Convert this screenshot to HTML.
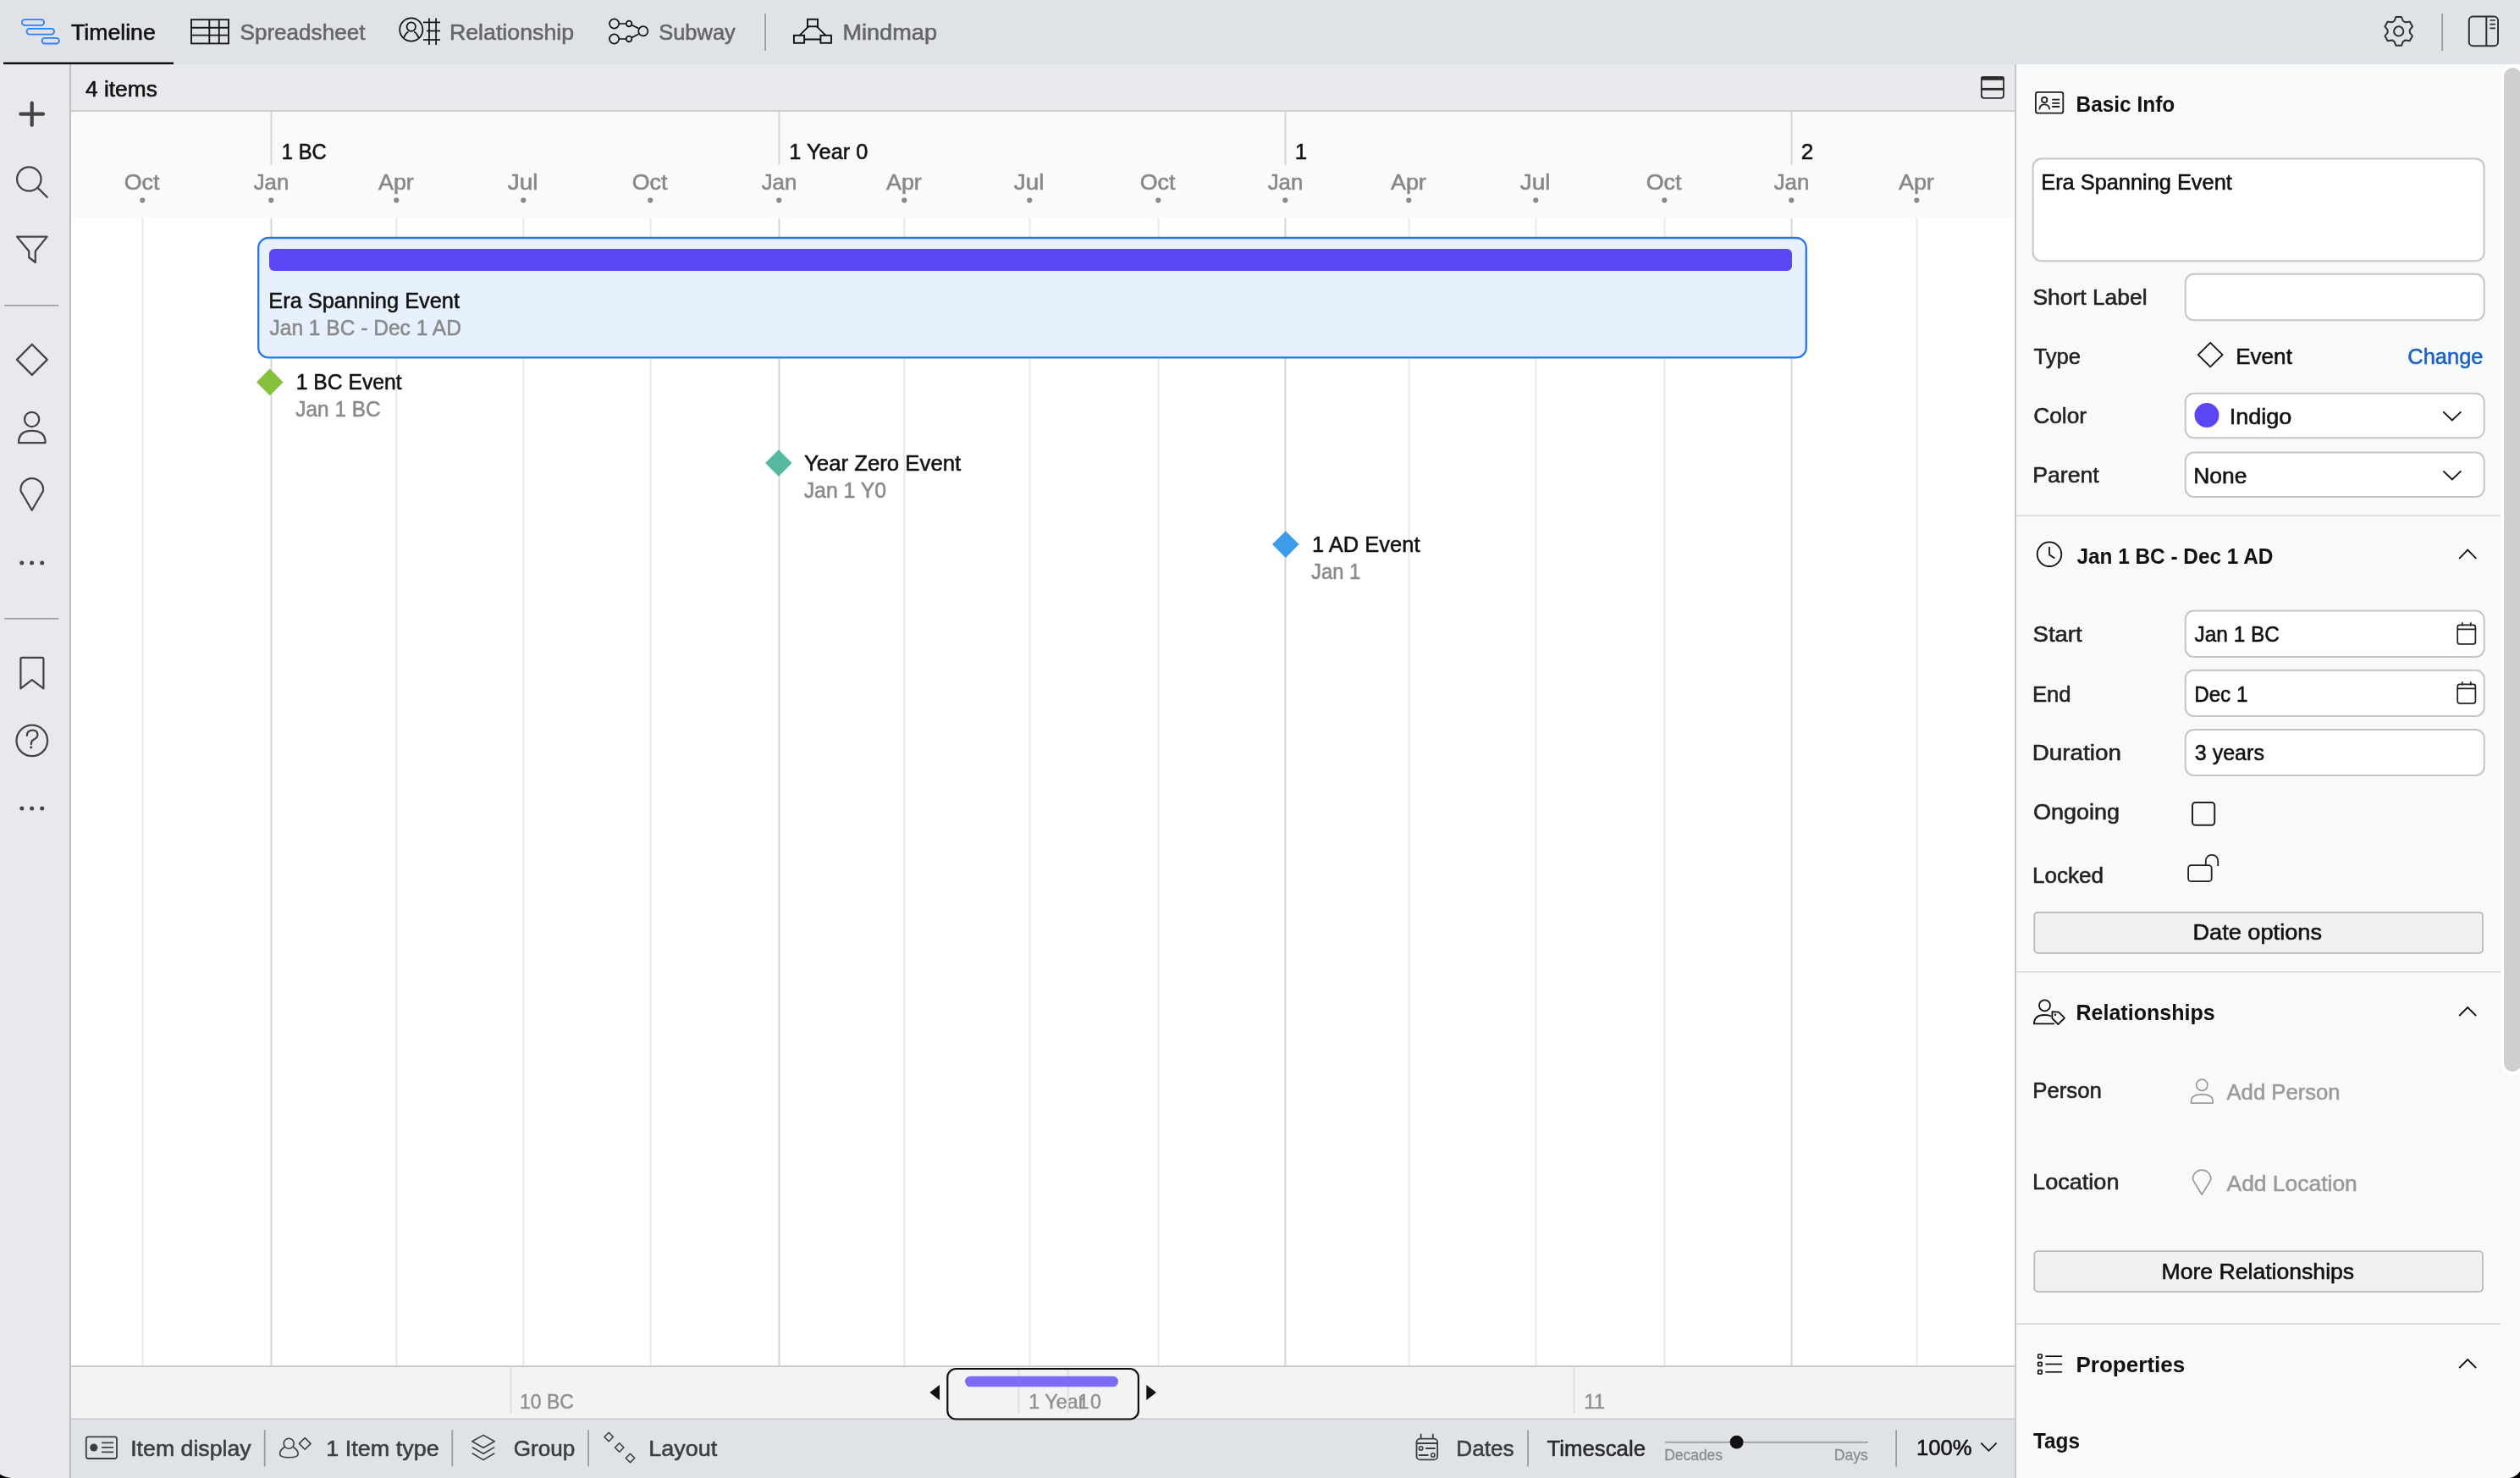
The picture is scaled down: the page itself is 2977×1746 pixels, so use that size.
<!DOCTYPE html>
<html><head><meta charset="utf-8"><title>Timeline</title>
<style>
html,body{margin:0;padding:0;width:2977px;height:1746px;overflow:hidden;background:#f8f9f9;}
body{position:relative;font-family:'Liberation Sans', sans-serif;}
text{font-family:'Liberation Sans', sans-serif;}
</style></head><body>
<svg width="2977" height="1746" viewBox="0 0 2977 1746" style="position:absolute;left:0;top:0;font-family:'Liberation Sans', sans-serif;will-change:transform"><rect x="0" y="0" width="2977" height="1746" fill="#f8f9f9" />
<rect x="0" y="0" width="2977" height="76" fill="#dfe2e6" />
<rect x="0" y="76" width="83" height="1670" fill="#e8e9ec" />
<rect x="82" y="76" width="2" height="1670" fill="#bcbdc0" />
<rect x="84" y="76" width="2297" height="55" fill="#e9eaee" />
<rect x="84" y="130" width="2297" height="2" fill="#cdcdcf" />
<rect x="84" y="132" width="2297" height="126" fill="#fafafa" />
<rect x="84" y="258" width="2297" height="1356" fill="#ffffff" />
<rect x="84" y="1613" width="2297" height="2" fill="#cbcbcb" />
<rect x="84" y="1615" width="2297" height="61" fill="#f3f3f3" />
<rect x="84" y="1675.5" width="2297" height="2" fill="#c9c9cb" />
<rect x="84" y="1677" width="2297" height="69" fill="#dfe2e6" />
<rect x="2381" y="76" width="596" height="1670" fill="#f8f9f9" />
<rect x="2380" y="76" width="2" height="1670" fill="#c8c9ca" />
<g fill="none" stroke="#2f7ff7" stroke-width="1.8"><rect x="25.9" y="23.1" width="26.2" height="6.7" rx="3.3"/><rect x="31.5" y="33.9" width="32.6" height="6.7" rx="3.3"/><rect x="49.6" y="44.8" width="20.2" height="6.7" rx="3.3"/></g>
<rect x="4" y="73.5" width="201" height="2.5" fill="#111" />
<text id="t0" x="84.0" y="47.3" font-size="26" fill="#111" stroke="#111" stroke-width="0.55" stroke-linejoin="round" textLength="99.80" lengthAdjust="spacingAndGlyphs" >Timeline</text>
<g fill="none" stroke="#1a1a1a" stroke-width="1.9"><rect x="226" y="23.2" width="44" height="28.2"/><line x1="226" y1="32.8" x2="270" y2="32.8"/><line x1="226" y1="41.6" x2="270" y2="41.6"/><line x1="247.3" y1="23.2" x2="247.3" y2="51.4"/><line x1="258.8" y1="23.2" x2="258.8" y2="51.4"/></g>
<text id="t1" x="283.5" y="47.3" font-size="26" fill="#666" stroke="#666" stroke-width="0.55" stroke-linejoin="round" textLength="147.95" lengthAdjust="spacingAndGlyphs" >Spreadsheet</text>
<g fill="none" stroke="#111" stroke-width="1.7"><circle cx="485.8" cy="35" r="13.6"/><circle cx="485.8" cy="31.6" r="5.2"/><path d="M476.6 45.5 Q480 38 482.5 37.6 M495 45.5 Q491.6 38 489.1 37.6"/><line x1="507" y1="21.5" x2="507" y2="53"/><line x1="515.1" y1="21.5" x2="515.1" y2="53"/><line x1="500" y1="26.4" x2="520" y2="26.4"/><line x1="504" y1="36.5" x2="520" y2="36.5"/><line x1="500" y1="47" x2="520" y2="47"/></g>
<text id="t2" x="530.94" y="47.3" font-size="26" fill="#666" stroke="#666" stroke-width="0.55" stroke-linejoin="round" textLength="147.15" lengthAdjust="spacingAndGlyphs" >Relationship</text>
<g fill="none" stroke="#111" stroke-width="1.7"><circle cx="725.6" cy="28" r="5.6"/><circle cx="725.6" cy="46" r="5.6"/><circle cx="743.1" cy="28" r="3.3"/><circle cx="743.1" cy="46" r="3.3"/><circle cx="759.8" cy="36.8" r="5.6"/><path d="M731.2 28 H739.8 M731.2 46 H739.8 M746.2 29.6 L754.4 33.6 M746.2 44.4 L754.4 40.2"/></g>
<text id="t3" x="778.26" y="47.3" font-size="26" fill="#666" stroke="#666" stroke-width="0.55" stroke-linejoin="round" textLength="90.49" lengthAdjust="spacingAndGlyphs" >Subway</text>
<rect x="903.2" y="16" width="1.8" height="44" fill="#9b9c9f" />
<g fill="none" stroke="#111" stroke-width="1.9"><rect x="954" y="22.8" width="12" height="8.5"/><rect x="937.9" y="41.8" width="12.2" height="9"/><rect x="969.4" y="41.8" width="12.6" height="9"/><path d="M955 31.3 L944.5 41.8 M965 31.3 L975.5 41.8 M950.1 46.5 H969.4"/></g>
<text id="t4" x="995.41" y="47.3" font-size="26" fill="#666" stroke="#666" stroke-width="0.55" stroke-linejoin="round" textLength="111.56" lengthAdjust="spacingAndGlyphs" >Mindmap</text>
<g fill="none" stroke="#2e2f31" stroke-width="2" stroke-linejoin="round"><path d="M2828.54 24.75 L2830.42 20.02 L2836.98 20.02 L2838.86 24.75 L2841.64 26.36 L2846.68 25.62 L2849.96 31.30 L2846.80 35.29 L2846.80 38.51 L2849.96 42.50 L2846.68 48.18 L2841.64 47.44 L2838.86 49.05 L2836.98 53.78 L2830.42 53.78 L2828.54 49.05 L2825.76 47.44 L2820.72 48.18 L2817.44 42.50 L2820.60 38.51 L2820.60 35.29 L2817.44 31.30 L2820.72 25.62 L2825.76 26.36Z"/><circle cx="2833.7" cy="36.9" r="5.6"/></g>
<rect x="2884.3" y="16" width="1.8" height="44" fill="#9b9c9f" />
<g fill="none" stroke="#2e2f31" stroke-width="2"><rect x="2916.8" y="19.6" width="34.2" height="34.6" rx="4.5"/><line x1="2937.3" y1="19.6" x2="2937.3" y2="54.2"/></g><g stroke="#2e2f31" stroke-width="1.7" stroke-linecap="round"><line x1="2942" y1="24" x2="2947.2" y2="24"/><line x1="2942" y1="28.7" x2="2947.2" y2="28.7"/><line x1="2942" y1="33.4" x2="2947.2" y2="33.4"/></g>
<g fill="none" stroke="#444" stroke-width="2.25" stroke-linecap="round" stroke-linejoin="round"><path d="M37.7 121.6 V147.8 M24.4 134.7 H51" stroke-width="4.2"/><circle cx="34.3" cy="211.5" r="14.2"/><path d="M44.6 221.9 L55.8 233"/><path d="M20 279.6 H55.6 L41.8 296.8 V310 L34.2 304 V296.8 Z"/><path d="M37.8 406.8 L55.8 424.9 L37.8 442.9 L19.9 424.9 Z"/><circle cx="37.6" cy="495.4" r="8.6"/><path d="M22 523 Q22 508.8 37.6 508.8 Q53.6 508.8 53.6 523 Z"/><path d="M37.7 602.8 L28 586 Q24.5 580.5 24.5 579.5 A13.3 13.3 0 1 1 51 579.5 Q51 580.5 47.5 586 Z"/><path d="M24.4 813.4 V778.4 Q24.4 776.8 26 776.8 H49.8 Q51.4 776.8 51.4 778.4 V813.4 L37.8 803.2 Z"/><circle cx="37.8" cy="874.9" r="18.3"/><path d="M31.8 869 Q32.2 862.6 38.5 862.6 Q44.4 862.6 44.4 868 Q44.4 871.6 40 873.6 Q36.8 875 36.8 879.2"/></g>
<circle cx="36.7" cy="882.8" r="1.6" fill="#444"/>
<circle cx="25.8" cy="665.1" r="2.5" fill="#444"/>
<circle cx="37.6" cy="665.1" r="2.5" fill="#444"/>
<circle cx="49.7" cy="665.1" r="2.5" fill="#444"/>
<circle cx="25.8" cy="955" r="2.5" fill="#444"/>
<circle cx="37.6" cy="955" r="2.5" fill="#444"/>
<circle cx="49.7" cy="955" r="2.5" fill="#444"/>
<rect x="5" y="360" width="64" height="1.6" fill="#9a9b9e" />
<rect x="5" y="730" width="64" height="1.6" fill="#9a9b9e" />
<text id="t5" x="101.0" y="114" font-size="26" fill="#111" stroke="#111" stroke-width="0.55" stroke-linejoin="round" textLength="84.82" lengthAdjust="spacingAndGlyphs" >4 items</text>
<g fill="none" stroke="#2b2b2b" stroke-width="1.8"><rect x="2340.8" y="91.1" width="26.1" height="24.7" rx="3"/></g><rect x="2340" y="90.2" width="27.8" height="4.6" fill="#2b2b2b" rx="1.5" /><rect x="2340.5" y="103.9" width="27" height="2.8" fill="#2b2b2b" />
<rect x="167.5" y="258" width="2" height="1355" fill="#e8e8e8" />
<text id="t6" x="146.7" y="223.8" font-size="26" fill="#878787" stroke="#878787" stroke-width="0.55" stroke-linejoin="round" textLength="41.72" lengthAdjust="spacingAndGlyphs" >Oct</text>
<circle cx="168.25" cy="236.6" r="3.1" fill="#8a8a8a"/>
<rect x="319.5" y="258" width="2" height="1355" fill="#d6d6d6" />
<text id="t7" x="299.69" y="223.8" font-size="26" fill="#878787" stroke="#878787" stroke-width="0.55" stroke-linejoin="round" textLength="41.67" lengthAdjust="spacingAndGlyphs" >Jan</text>
<circle cx="320.25" cy="236.6" r="3.1" fill="#8a8a8a"/>
<rect x="319.5" y="132" width="2" height="63" fill="#d6d6d6" />
<rect x="467.5" y="258" width="2" height="1355" fill="#e8e8e8" />
<text id="t8" x="446.92" y="223.8" font-size="26" fill="#878787" stroke="#878787" stroke-width="0.55" stroke-linejoin="round" textLength="41.95" lengthAdjust="spacingAndGlyphs" >Apr</text>
<circle cx="468.25" cy="236.6" r="3.1" fill="#8a8a8a"/>
<rect x="617.5" y="258" width="2" height="1355" fill="#e8e8e8" />
<text id="t9" x="599.76" y="223.8" font-size="26" fill="#878787" stroke="#878787" stroke-width="0.55" stroke-linejoin="round" textLength="35.85" lengthAdjust="spacingAndGlyphs" >Jul</text>
<circle cx="618.25" cy="236.6" r="3.1" fill="#8a8a8a"/>
<rect x="767.5" y="258" width="2" height="1355" fill="#e8e8e8" />
<text id="t10" x="746.7" y="223.8" font-size="26" fill="#878787" stroke="#878787" stroke-width="0.55" stroke-linejoin="round" textLength="41.72" lengthAdjust="spacingAndGlyphs" >Oct</text>
<circle cx="768.25" cy="236.6" r="3.1" fill="#8a8a8a"/>
<rect x="919.5" y="258" width="2" height="1355" fill="#d6d6d6" />
<text id="t11" x="899.69" y="223.8" font-size="26" fill="#878787" stroke="#878787" stroke-width="0.55" stroke-linejoin="round" textLength="41.67" lengthAdjust="spacingAndGlyphs" >Jan</text>
<circle cx="920.25" cy="236.6" r="3.1" fill="#8a8a8a"/>
<rect x="919.5" y="132" width="2" height="63" fill="#d6d6d6" />
<rect x="1067.5" y="258" width="2" height="1355" fill="#e8e8e8" />
<text id="t12" x="1046.92" y="223.8" font-size="26" fill="#878787" stroke="#878787" stroke-width="0.55" stroke-linejoin="round" textLength="41.95" lengthAdjust="spacingAndGlyphs" >Apr</text>
<circle cx="1068.25" cy="236.6" r="3.1" fill="#8a8a8a"/>
<rect x="1215.5" y="258" width="2" height="1355" fill="#e8e8e8" />
<text id="t13" x="1197.76" y="223.8" font-size="26" fill="#878787" stroke="#878787" stroke-width="0.55" stroke-linejoin="round" textLength="35.85" lengthAdjust="spacingAndGlyphs" >Jul</text>
<circle cx="1216.25" cy="236.6" r="3.1" fill="#8a8a8a"/>
<rect x="1367.5" y="258" width="2" height="1355" fill="#e8e8e8" />
<text id="t14" x="1346.7" y="223.8" font-size="26" fill="#878787" stroke="#878787" stroke-width="0.55" stroke-linejoin="round" textLength="41.72" lengthAdjust="spacingAndGlyphs" >Oct</text>
<circle cx="1368.25" cy="236.6" r="3.1" fill="#8a8a8a"/>
<rect x="1517.5" y="258" width="2" height="1355" fill="#d6d6d6" />
<text id="t15" x="1497.69" y="223.8" font-size="26" fill="#878787" stroke="#878787" stroke-width="0.55" stroke-linejoin="round" textLength="41.67" lengthAdjust="spacingAndGlyphs" >Jan</text>
<circle cx="1518.25" cy="236.6" r="3.1" fill="#8a8a8a"/>
<rect x="1517.5" y="132" width="2" height="63" fill="#d6d6d6" />
<rect x="1663.5" y="258" width="2" height="1355" fill="#e8e8e8" />
<text id="t16" x="1642.92" y="223.8" font-size="26" fill="#878787" stroke="#878787" stroke-width="0.55" stroke-linejoin="round" textLength="41.95" lengthAdjust="spacingAndGlyphs" >Apr</text>
<circle cx="1664.25" cy="236.6" r="3.1" fill="#8a8a8a"/>
<rect x="1813.5" y="258" width="2" height="1355" fill="#e8e8e8" />
<text id="t17" x="1795.76" y="223.8" font-size="26" fill="#878787" stroke="#878787" stroke-width="0.55" stroke-linejoin="round" textLength="35.85" lengthAdjust="spacingAndGlyphs" >Jul</text>
<circle cx="1814.25" cy="236.6" r="3.1" fill="#8a8a8a"/>
<rect x="1965.5" y="258" width="2" height="1355" fill="#e8e8e8" />
<text id="t18" x="1944.7" y="223.8" font-size="26" fill="#878787" stroke="#878787" stroke-width="0.55" stroke-linejoin="round" textLength="41.72" lengthAdjust="spacingAndGlyphs" >Oct</text>
<circle cx="1966.25" cy="236.6" r="3.1" fill="#8a8a8a"/>
<rect x="2115.5" y="258" width="2" height="1355" fill="#d6d6d6" />
<text id="t19" x="2095.69" y="223.8" font-size="26" fill="#878787" stroke="#878787" stroke-width="0.55" stroke-linejoin="round" textLength="41.67" lengthAdjust="spacingAndGlyphs" >Jan</text>
<circle cx="2116.25" cy="236.6" r="3.1" fill="#8a8a8a"/>
<rect x="2115.5" y="132" width="2" height="63" fill="#d6d6d6" />
<rect x="2263.5" y="258" width="2" height="1355" fill="#e8e8e8" />
<text id="t20" x="2242.92" y="223.8" font-size="26" fill="#878787" stroke="#878787" stroke-width="0.55" stroke-linejoin="round" textLength="41.95" lengthAdjust="spacingAndGlyphs" >Apr</text>
<circle cx="2264.25" cy="236.6" r="3.1" fill="#8a8a8a"/>
<text id="t21" x="332.83" y="188" font-size="26" fill="#111" stroke="#111" stroke-width="0.55" stroke-linejoin="round" textLength="52.91" lengthAdjust="spacingAndGlyphs" >1 BC</text>
<text id="t22" x="932.27" y="188" font-size="26" fill="#111" stroke="#111" stroke-width="0.55" stroke-linejoin="round" textLength="93.15" lengthAdjust="spacingAndGlyphs" >1 Year 0</text>
<text id="t23" x="1529.75" y="188" font-size="26" fill="#111" stroke="#111" stroke-width="0.55" stroke-linejoin="round" >1</text>
<text id="t24" x="2127.65" y="188" font-size="26" fill="#111" stroke="#111" stroke-width="0.55" stroke-linejoin="round" >2</text>
<rect x="305.2" y="281" width="1828.6" height="141.4" fill="#e7f0fd" rx="12" stroke="#2277f5" stroke-width="2.3" />
<rect x="318" y="294" width="1799" height="26" fill="#5b46f5" rx="6" />
<text id="t25" x="317.29" y="363.8" font-size="26" fill="#111" stroke="#111" stroke-width="0.55" stroke-linejoin="round" textLength="225.75" lengthAdjust="spacingAndGlyphs" >Era Spanning Event</text>
<text id="t26" x="318.47" y="395.8" font-size="26" fill="#8a8a8a" stroke="#8a8a8a" stroke-width="0.55" stroke-linejoin="round" textLength="226.40" lengthAdjust="spacingAndGlyphs" >Jan 1 BC - Dec 1 AD</text>
<path d="M318.8 435.59999999999997 L334.6 451.4 L318.8 467.2 L303.0 451.4 Z" fill="#87c13b"/>
<text id="t27" x="349.68" y="460" font-size="26" fill="#111" stroke="#111" stroke-width="0.55" stroke-linejoin="round" textLength="124.94" lengthAdjust="spacingAndGlyphs" >1 BC Event</text>
<text id="t28" x="349.37" y="492" font-size="26" fill="#8a8a8a" stroke="#8a8a8a" stroke-width="0.55" stroke-linejoin="round" textLength="100.26" lengthAdjust="spacingAndGlyphs" >Jan 1 BC</text>
<path d="M919.8 531.2 L935.5999999999999 547 L919.8 562.8 L904.0 547 Z" fill="#55b9a0"/>
<text id="t29" x="950.0" y="556.3" font-size="26" fill="#111" stroke="#111" stroke-width="0.55" stroke-linejoin="round" textLength="185.24" lengthAdjust="spacingAndGlyphs" >Year Zero Event</text>
<text id="t30" x="949.7" y="587.8" font-size="26" fill="#8a8a8a" stroke="#8a8a8a" stroke-width="0.55" stroke-linejoin="round" textLength="97.46" lengthAdjust="spacingAndGlyphs" >Jan 1 Y0</text>
<path d="M1518.8 627.3000000000001 L1534.6 643.1 L1518.8 658.9 L1503.0 643.1 Z" fill="#3d9ce9"/>
<text id="t31" x="1550.02" y="651.8" font-size="26" fill="#111" stroke="#111" stroke-width="0.55" stroke-linejoin="round" textLength="127.46" lengthAdjust="spacingAndGlyphs" >1 AD Event</text>
<text id="t32" x="1549.1" y="683.8" font-size="26" fill="#8a8a8a" stroke="#8a8a8a" stroke-width="0.55" stroke-linejoin="round" textLength="58.26" lengthAdjust="spacingAndGlyphs" >Jan 1</text>
<rect x="602.5" y="1615" width="2" height="55" fill="#e0e0e0" />
<text id="t33" x="614.04" y="1664" font-size="24" fill="#909090" stroke="#909090" stroke-width="0.45" stroke-linejoin="round" textLength="63.93" lengthAdjust="spacingAndGlyphs" >10 BC</text>
<rect x="1202.3" y="1615" width="2" height="55" fill="#e0e0e0" />
<text id="t34" x="1215.23" y="1664" font-size="24" fill="#909090" stroke="#909090" stroke-width="0.45" stroke-linejoin="round" textLength="85.64" lengthAdjust="spacingAndGlyphs" >1 Year 0</text>
<rect x="1260.7" y="1615" width="2" height="55" fill="#e0e0e0" />
<text id="t35" x="1273.2" y="1664" font-size="24" fill="#909090" stroke="#909090" stroke-width="0.45" stroke-linejoin="round" >1</text>
<rect x="1858.5" y="1615" width="2" height="55" fill="#e0e0e0" />
<text id="t36" x="1871.15" y="1664" font-size="24" fill="#909090" stroke="#909090" stroke-width="0.45" stroke-linejoin="round" >11</text>
<rect x="1119.3" y="1617" width="225.6" height="59.5" fill="none" rx="10" stroke="#111" stroke-width="2.2" />
<rect x="1140" y="1625.7" width="181" height="12.6" fill="#7b6cf6" rx="6.3" />
<path d="M1098.3 1645 L1110 1636 V1654 Z" fill="#111"/>
<path d="M1366 1645 L1354.3 1636 V1654 Z" fill="#111"/>
<g fill="none" stroke="#3d3e40" stroke-width="1.8" stroke-linecap="round" stroke-linejoin="round"><rect x="101.8" y="1697.4" width="36.2" height="25.6" rx="2.5"/><path d="M120.8 1704.4 H133.4 M120.8 1709.8 H133.4 M120.8 1715.4 H133.4"/></g><circle cx="110.8" cy="1710" r="4.6" fill="#3d3e40"/>
<text id="t37" x="154.2" y="1719.5" font-size="26" fill="#3d3e40" stroke="#3d3e40" stroke-width="0.55" stroke-linejoin="round" textLength="142.53" lengthAdjust="spacingAndGlyphs" >Item display</text>
<rect x="311.8" y="1689.3" width="1.8" height="43" fill="#9b9c9f" />
<g fill="none" stroke="#3d3e40" stroke-width="1.6" stroke-linejoin="round"><circle cx="341.2" cy="1705.2" r="6"/><path d="M336 1709.5 Q330.6 1713 330.6 1717.5 Q330.6 1721.8 341.3 1721.8 Q352.2 1721.8 352.2 1717.5 Q352.2 1713 346.4 1709.5"/><path d="M360.2 1698.6 L367 1705.4 L360.2 1712.2 L353.4 1705.4 Z"/></g>
<text id="t38" x="385.21" y="1719.5" font-size="26" fill="#3d3e40" stroke="#3d3e40" stroke-width="0.55" stroke-linejoin="round" textLength="133.44" lengthAdjust="spacingAndGlyphs" >1 Item type</text>
<rect x="533.4" y="1689.3" width="1.8" height="43" fill="#9b9c9f" />
<g fill="none" stroke="#3d3e40" stroke-width="1.6" stroke-linejoin="round"><path d="M571 1695.4 L584.2 1702.8 L571 1710.2 L557.8 1702.8 Z"/><path d="M557.8 1709.6 L571 1717.2 L584.2 1709.6"/><path d="M557.8 1716.8 L571 1724.6 L584.2 1716.8"/></g>
<text id="t39" x="606.7" y="1719.5" font-size="26" fill="#3d3e40" stroke="#3d3e40" stroke-width="0.55" stroke-linejoin="round" textLength="72.57" lengthAdjust="spacingAndGlyphs" >Group</text>
<rect x="694.2" y="1689.3" width="1.8" height="43" fill="#9b9c9f" />
<g fill="none" stroke="#3d3e40" stroke-width="1.6" stroke-linejoin="round"><path d="M719.2 1692.3 L724.4000000000001 1697.5 L719.2 1702.7 L714.0 1697.5 Z"/><path d="M731.7 1704.8 L736.9000000000001 1710 L731.7 1715.2 L726.5 1710 Z"/><path d="M744.5 1717.3 L749.7 1722.5 L744.5 1727.7 L739.3 1722.5 Z"/></g>
<text id="t40" x="766.22" y="1719.5" font-size="26" fill="#3d3e40" stroke="#3d3e40" stroke-width="0.55" stroke-linejoin="round" textLength="81.16" lengthAdjust="spacingAndGlyphs" >Layout</text>
<g fill="none" stroke="#3d3e40" stroke-width="1.8" stroke-linecap="round"><rect x="1673.5" y="1699.6" width="24.6" height="24.8" rx="4"/><path d="M1673.5 1705 H1698.1 M1678.6 1694.5 V1699 M1692.8 1694.5 V1699 M1684.8 1711 H1695 M1676.5 1719 H1686.8"/><circle cx="1678.6" cy="1711" r="2.2" stroke-width="1.6"/><circle cx="1692.8" cy="1719" r="2.2" stroke-width="1.6"/></g>
<text id="t41" x="1720.29" y="1720" font-size="26" fill="#3d3e40" stroke="#3d3e40" stroke-width="0.55" stroke-linejoin="round" textLength="68.33" lengthAdjust="spacingAndGlyphs" >Dates</text>
<rect x="1804.2" y="1689.5" width="1.8" height="43" fill="#9b9c9f" />
<text id="t42" x="1827.4" y="1720" font-size="26" fill="#2a2a2a" stroke="#2a2a2a" stroke-width="0.55" stroke-linejoin="round" textLength="116.60" lengthAdjust="spacingAndGlyphs" >Timescale</text>
<rect x="1967" y="1702.9" width="240" height="1.7" fill="#9a9a9a" />
<circle cx="2051.6" cy="1703.7" r="7.9" fill="#111"/>
<text id="t43" x="1966.23" y="1725" font-size="18" fill="#8c8c8c" stroke="#8c8c8c" stroke-width="0.3" stroke-linejoin="round" textLength="68.81" lengthAdjust="spacingAndGlyphs" >Decades</text>
<text id="t44" x="2166.82" y="1725" font-size="18" fill="#8c8c8c" stroke="#8c8c8c" stroke-width="0.3" stroke-linejoin="round" textLength="39.96" lengthAdjust="spacingAndGlyphs" >Days</text>
<rect x="2239.2" y="1689.5" width="1.8" height="43" fill="#9b9c9f" />
<text id="t45" x="2264.12" y="1719.2" font-size="26" fill="#111" stroke="#111" stroke-width="0.55" stroke-linejoin="round" textLength="65.37" lengthAdjust="spacingAndGlyphs" >100%</text>
<path d="M2340.3 1704.6 L2349.4 1713.8 L2358.6 1704.6" fill="none" stroke="#111" stroke-width="1.8"/>
<g fill="none" stroke="#1e1e1e" stroke-width="1.8"><rect x="2404.9" y="108.9" width="32.4" height="24.8" rx="2.5"/><circle cx="2415.2" cy="118" r="3.2"/><path d="M2409.2 129.4 Q2409.8 123.4 2415.2 123.4 Q2420.6 123.4 2421.4 129.4"/><path d="M2424.2 117.6 H2433.2 M2424.2 121.8 H2433.2 M2424.2 126 H2433.2"/></g>
<text id="t46" x="2452.59" y="132" font-size="26" fill="#111" font-weight="700" textLength="116.61" lengthAdjust="spacingAndGlyphs" >Basic Info</text>
<rect x="2401.6" y="187.5" width="533" height="120.8" fill="#fff" rx="10" stroke="#c5c5c5" stroke-width="2" />
<text id="t47" x="2411.25" y="224" font-size="26" fill="#111" stroke="#111" stroke-width="0.55" stroke-linejoin="round" textLength="225.55" lengthAdjust="spacingAndGlyphs" >Era Spanning Event</text>
<text id="t48" x="2401.38" y="360.2" font-size="26" fill="#222" stroke="#222" stroke-width="0.55" stroke-linejoin="round" textLength="135.22" lengthAdjust="spacingAndGlyphs" >Short Label</text>
<rect x="2581.7" y="323.8" width="353" height="54.4" fill="#fff" rx="10" stroke="#c5c5c5" stroke-width="2" />
<text id="t49" x="2402.4" y="429.6" font-size="26" fill="#222" stroke="#222" stroke-width="0.55" stroke-linejoin="round" textLength="55.57" lengthAdjust="spacingAndGlyphs" >Type</text>
<path d="M2611.2 404.8 L2625.6 419.1 L2611.2 433.4 L2596.8 419.1 Z" fill="none" stroke="#111" stroke-width="1.8" stroke-linejoin="round"/>
<text id="t50" x="2641.2" y="429.6" font-size="26" fill="#111" stroke="#111" stroke-width="0.55" stroke-linejoin="round" textLength="66.70" lengthAdjust="spacingAndGlyphs" >Event</text>
<text id="t51" x="2844.25" y="429.6" font-size="26" fill="#1b5fc6" stroke="#1b5fc6" stroke-width="0.55" stroke-linejoin="round" textLength="89.24" lengthAdjust="spacingAndGlyphs" >Change</text>
<text id="t52" x="2402.19" y="500.2" font-size="26" fill="#222" stroke="#222" stroke-width="0.55" stroke-linejoin="round" textLength="62.85" lengthAdjust="spacingAndGlyphs" >Color</text>
<rect x="2581.7" y="464.7" width="353" height="52.6" fill="#fff" rx="10" stroke="#c5c5c5" stroke-width="2" />
<circle cx="2607" cy="490.5" r="14.5" fill="#5b46f5"/>
<text id="t53" x="2633.74" y="501.2" font-size="26" fill="#111" stroke="#111" stroke-width="0.55" stroke-linejoin="round" textLength="73.62" lengthAdjust="spacingAndGlyphs" >Indigo</text>
<path d="M2886.3 486.4 L2896.8500000000004 496.4 L2907.4 486.4" fill="none" stroke="#111" stroke-width="1.8"/>
<text id="t54" x="2401.15" y="570.4" font-size="26" fill="#222" stroke="#222" stroke-width="0.55" stroke-linejoin="round" textLength="78.55" lengthAdjust="spacingAndGlyphs" >Parent</text>
<rect x="2581.7" y="534.6" width="353" height="52.4" fill="#fff" rx="10" stroke="#c5c5c5" stroke-width="2" />
<text id="t55" x="2591.27" y="570.6" font-size="26" fill="#111" stroke="#111" stroke-width="0.55" stroke-linejoin="round" textLength="63.19" lengthAdjust="spacingAndGlyphs" >None</text>
<path d="M2886.3 556.4 L2896.8500000000004 566.4 L2907.4 556.4" fill="none" stroke="#111" stroke-width="1.8"/>
<rect x="2382" y="608" width="572" height="2" fill="#dfe1e1" />
<g fill="none" stroke="#111" stroke-width="1.8"><circle cx="2421" cy="654.7" r="14.3"/><path d="M2421 646 V655.3 L2427.4 659.6"/></g>
<text id="t56" x="2453.4" y="666" font-size="26" fill="#111" font-weight="700" textLength="232.03" lengthAdjust="spacingAndGlyphs" >Jan 1 BC - Dec 1 AD</text>
<path d="M2905.2 659.8 L2915.2 649.6 L2925.2 659.8" fill="none" stroke="#111" stroke-width="1.8"/>
<text id="t57" x="2401.64" y="758" font-size="26" fill="#222" stroke="#222" stroke-width="0.55" stroke-linejoin="round" textLength="57.97" lengthAdjust="spacingAndGlyphs" >Start</text>
<rect x="2581.7" y="721.5" width="353" height="54.5" fill="#fff" rx="10" stroke="#c5c5c5" stroke-width="2" />
<text id="t58" x="2592.47" y="758" font-size="26" fill="#111" stroke="#111" stroke-width="0.55" stroke-linejoin="round" textLength="100.46" lengthAdjust="spacingAndGlyphs" >Jan 1 BC</text>
<g fill="none" stroke="#1e1e1e" stroke-width="1.7"><rect x="2903.2" y="738.4" width="21.2" height="22.4" rx="2.5"/><path d="M2903.2 743.4 H2924.3999999999996 M2908.7999999999997 735.1999999999999 V739.4 M2918.7999999999997 735.1999999999999 V739.4"/></g>
<text id="t59" x="2400.92" y="828.6" font-size="26" fill="#222" stroke="#222" stroke-width="0.55" stroke-linejoin="round" textLength="45.73" lengthAdjust="spacingAndGlyphs" >End</text>
<rect x="2581.7" y="791.7" width="353" height="54.3" fill="#fff" rx="10" stroke="#c5c5c5" stroke-width="2" />
<text id="t60" x="2592.2" y="828.6" font-size="26" fill="#111" stroke="#111" stroke-width="0.55" stroke-linejoin="round" textLength="63.19" lengthAdjust="spacingAndGlyphs" >Dec 1</text>
<g fill="none" stroke="#1e1e1e" stroke-width="1.7"><rect x="2903.2" y="808.4" width="21.2" height="22.4" rx="2.5"/><path d="M2903.2 813.4 H2924.3999999999996 M2908.7999999999997 805.1999999999999 V809.4 M2918.7999999999997 805.1999999999999 V809.4"/></g>
<text id="t61" x="2400.76" y="897.7" font-size="26" fill="#222" stroke="#222" stroke-width="0.55" stroke-linejoin="round" textLength="105.11" lengthAdjust="spacingAndGlyphs" >Duration</text>
<rect x="2581.7" y="862" width="353" height="54" fill="#fff" rx="10" stroke="#c5c5c5" stroke-width="2" />
<text id="t62" x="2592.72" y="897.7" font-size="26" fill="#111" stroke="#111" stroke-width="0.55" stroke-linejoin="round" textLength="82.22" lengthAdjust="spacingAndGlyphs" >3 years</text>
<text id="t63" x="2401.96" y="967.9" font-size="26" fill="#222" stroke="#222" stroke-width="0.55" stroke-linejoin="round" textLength="102.10" lengthAdjust="spacingAndGlyphs" >Ongoing</text>
<rect x="2590" y="947.9" width="26.2" height="26.8" fill="none" rx="3.5" stroke="#222" stroke-width="2" />
<text id="t64" x="2401.0" y="1042.5" font-size="26" fill="#222" stroke="#222" stroke-width="0.55" stroke-linejoin="round" textLength="84.05" lengthAdjust="spacingAndGlyphs" >Locked</text>
<g fill="none" stroke="#222" stroke-width="1.8"><rect x="2585.1" y="1022.2" width="27.6" height="19" rx="3.5"/><path d="M2605.8 1022.2 V1017 A7.2 7.2 0 0 1 2620.2 1017 V1023"/></g>
<rect x="2403.3" y="1077.8" width="529.6" height="48" fill="#f0f1f3" rx="4" stroke="#b8b8ba" stroke-width="1.8" />
<text id="t65" x="2590.42" y="1110" font-size="26" fill="#111" stroke="#111" stroke-width="0.55" stroke-linejoin="round" textLength="152.57" lengthAdjust="spacingAndGlyphs" >Date options</text>
<rect x="2382" y="1147" width="572" height="2" fill="#dfe1e1" />
<g fill="none" stroke="#111" stroke-width="1.8" stroke-linejoin="round"><circle cx="2415.5" cy="1187.8" r="6.5"/><path d="M2427 1209.4 H2403 Q2403 1199 2415.6 1199 Q2420.2 1199 2423.4 1200.5"/><path d="M2424.4 1195.2 L2432 1195.6 L2439 1202.6 L2431.4 1210 L2424.4 1203 Z"/></g><circle cx="2428" cy="1198.8" r="1.2" fill="#111"/>
<text id="t66" x="2452.46" y="1204.8" font-size="26" fill="#111" font-weight="700" textLength="164.19" lengthAdjust="spacingAndGlyphs" >Relationships</text>
<path d="M2905.2 1200 L2915.2 1190 L2925.2 1200" fill="none" stroke="#111" stroke-width="1.8"/>
<text id="t67" x="2401.22" y="1296.5" font-size="26" fill="#222" stroke="#222" stroke-width="0.55" stroke-linejoin="round" textLength="81.76" lengthAdjust="spacingAndGlyphs" >Person</text>
<g fill="none" stroke="#9c9c9c" stroke-width="1.7" stroke-linejoin="round"><circle cx="2601.3" cy="1281.8" r="6.6"/><path d="M2588.6 1303.2 V1300.5 Q2588.6 1292.8 2601.3 1292.8 Q2614 1292.8 2614 1300.5 V1303.2 Z"/></g>
<text id="t68" x="2630.49" y="1298.9" font-size="26" fill="#9a9a9a" stroke="#9a9a9a" stroke-width="0.55" stroke-linejoin="round" textLength="134.16" lengthAdjust="spacingAndGlyphs" >Add Person</text>
<text id="t69" x="2401.12" y="1405" font-size="26" fill="#222" stroke="#222" stroke-width="0.55" stroke-linejoin="round" textLength="102.35" lengthAdjust="spacingAndGlyphs" >Location</text>
<g fill="none" stroke="#9c9c9c" stroke-width="1.7" stroke-linejoin="round"><path d="M2601.2 1411.2 L2593 1397.8 Q2590.5 1393.8 2590.5 1392.8 A10.7 10.7 0 1 1 2611.9 1392.8 Q2611.9 1393.8 2609.4 1397.8 Z"/></g>
<text id="t70" x="2630.51" y="1407" font-size="26" fill="#9a9a9a" stroke="#9a9a9a" stroke-width="0.55" stroke-linejoin="round" textLength="154.31" lengthAdjust="spacingAndGlyphs" >Add Location</text>
<rect x="2403.3" y="1478.2" width="529.6" height="47.6" fill="#f0f1f3" rx="4" stroke="#b8b8ba" stroke-width="1.8" />
<text id="t71" x="2553.49" y="1510.6" font-size="26" fill="#111" stroke="#111" stroke-width="0.55" stroke-linejoin="round" textLength="227.70" lengthAdjust="spacingAndGlyphs" >More Relationships</text>
<rect x="2382" y="1563" width="572" height="2" fill="#dfe1e1" />
<g fill="none" stroke="#111" stroke-width="1.7"><rect x="2407.7" y="1600.0" width="4.4" height="4.4" rx="0.8"/><line x1="2416.4" y1="1602.2" x2="2436.1" y2="1602.2"/><rect x="2407.7" y="1609.3" width="4.4" height="4.4" rx="0.8"/><line x1="2416.4" y1="1611.5" x2="2436.1" y2="1611.5"/><rect x="2407.7" y="1618.6" width="4.4" height="4.4" rx="0.8"/><line x1="2416.4" y1="1620.8" x2="2436.1" y2="1620.8"/></g>
<text id="t72" x="2452.4" y="1621.2" font-size="26" fill="#111" font-weight="700" textLength="128.92" lengthAdjust="spacingAndGlyphs" >Properties</text>
<path d="M2905.2 1616 L2915.2 1606 L2925.2 1616" fill="none" stroke="#111" stroke-width="1.8"/>
<text id="t73" x="2402.0" y="1710.8" font-size="26" fill="#111" font-weight="700" textLength="55.02" lengthAdjust="spacingAndGlyphs" >Tags</text>
<rect x="2954" y="76.2" width="28" height="1194" fill="#ffffff" rx="14" />
<rect x="2958" y="80" width="20.5" height="1186" fill="#cfcfcf" rx="10.2" />
<path d="M0 1741.5 Q4.5 1745.2 15 1746.2 H0 Z" fill="#000"/>
<path d="M2977 1738.2 Q2972.5 1744.6 2964 1746.2 H2977 Z" fill="#000"/></svg>
</body></html>
